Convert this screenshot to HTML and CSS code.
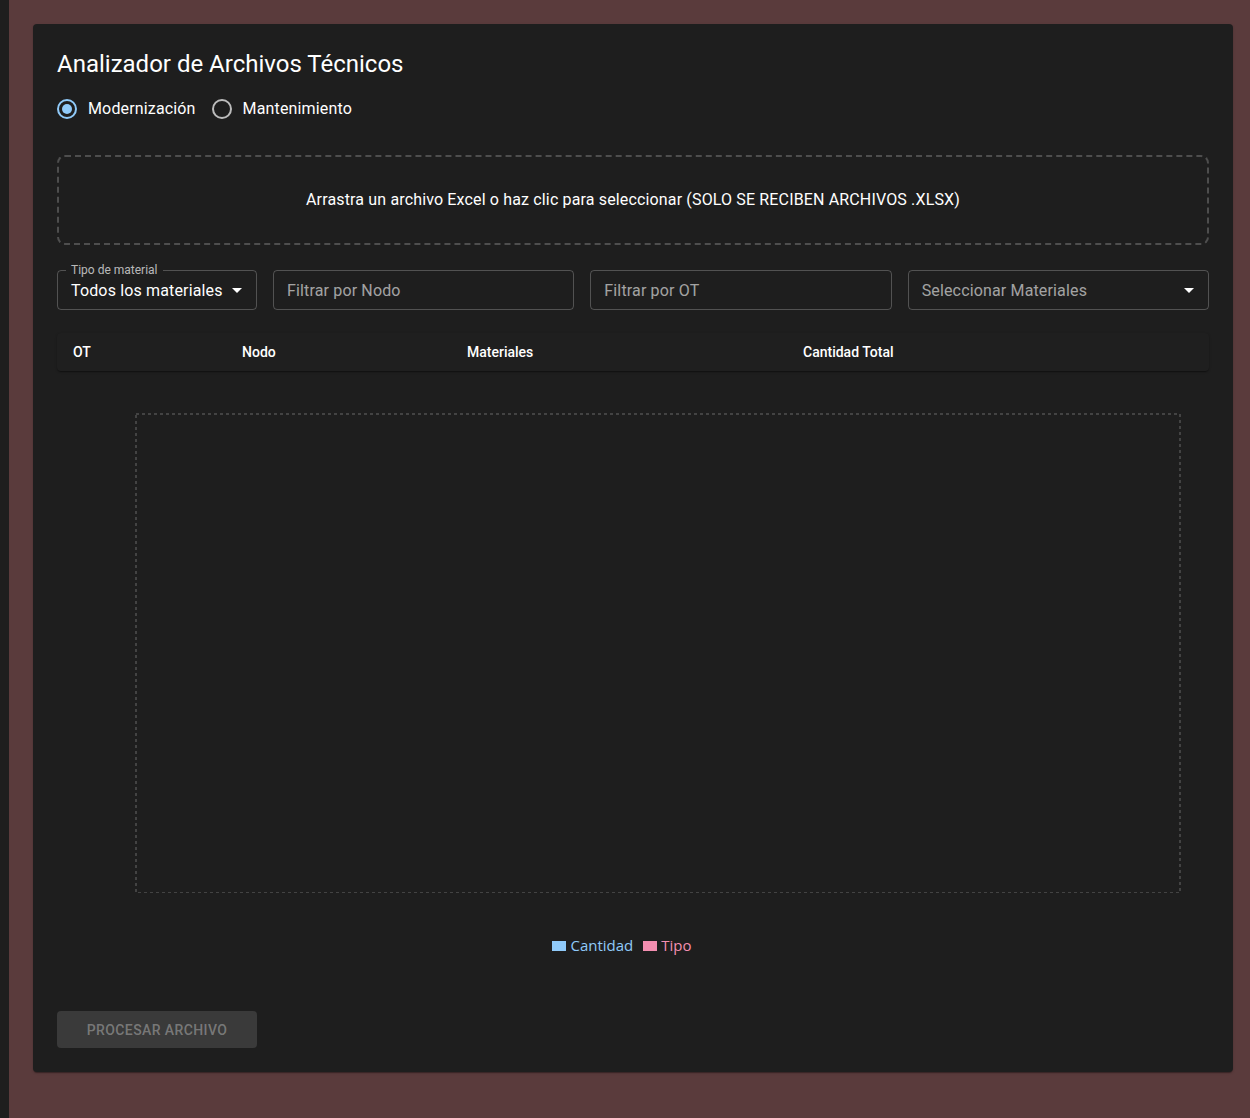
FILE: index.html
```html
<!DOCTYPE html>
<html lang="es">
<head>
<meta charset="utf-8">
<title>Analizador de Archivos Técnicos</title>
<link rel="stylesheet" href="styles.css">
</head>
<body>
<div class="strip"></div>
<main class="main">
  <section class="card">
    <h1 class="title">Analizador de Archivos Técnicos</h1>
    <div class="radios">
      <label class="radio checked">
        <span class="radio-box">
          <svg width="24" height="24" viewBox="0 0 24 24"><circle cx="12" cy="12" r="9" fill="none" stroke="#90caf9" stroke-width="2"/><circle cx="12" cy="12" r="5" fill="#90caf9"/></svg>
        </span>
        <span class="radio-label">Modernización</span>
      </label>
      <label class="radio">
        <span class="radio-box">
          <svg width="24" height="24" viewBox="0 0 24 24"><circle cx="12" cy="12" r="9" fill="none" stroke="rgba(255,255,255,0.7)" stroke-width="2"/></svg>
        </span>
        <span class="radio-label">Mantenimiento</span>
      </label>
    </div>

    <div class="dropzone">Arrastra un archivo Excel o haz clic para seleccionar (SOLO SE RECIBEN ARCHIVOS .XLSX)</div>

    <div class="filters">
      <div class="field select-field">
        <span class="field-label">Tipo de material</span>
        <span class="value">Todos los materiales</span>
        <svg class="caret" width="24" height="24" viewBox="0 0 24 24"><path d="M7 10l5 5 5-5z" fill="#fff"/></svg>
      </div>
      <div class="field grow"><span class="placeholder">Filtrar por Nodo</span></div>
      <div class="field grow"><span class="placeholder">Filtrar por OT</span></div>
      <div class="field grow multi">
        <span class="placeholder">Seleccionar Materiales</span>
        <svg class="caret" width="24" height="24" viewBox="0 0 24 24"><path d="M7 10l5 5 5-5z" fill="#fff"/></svg>
      </div>
    </div>

    <div class="table">
      <div class="th">OT</div>
      <div class="th">Nodo</div>
      <div class="th">Materiales</div>
      <div class="th">Cantidad Total</div>
    </div>

    <div class="chart">
      <svg class="plot" width="1152" height="502" viewBox="0 0 1152 502">
        <rect x="79" y="23" width="1044" height="479" fill="none" stroke="#434343" stroke-width="2" stroke-dasharray="3 3"/>
      </svg>
      <div class="legend">
        <span class="legend-item blue"><span class="swatch"></span>Cantidad</span>
        <span class="legend-item pink"><span class="swatch"></span>Tipo</span>
      </div>
    </div>

    <button class="btn" disabled>Procesar archivo</button>
  </section>
</main>
</body>
</html>
```

FILE: styles.css
```css
* { box-sizing: border-box; }

html, body {
  margin: 0;
  padding: 0;
}

body {
  display: flex;
  min-height: 100vh;
  background: #5a3b3c;
  font-family: Roboto, "Liberation Sans", sans-serif;
  color: #fff;
}

.strip {
  width: 9px;
  flex: none;
  background: #1e1e1e;
}

.main {
  flex: 1;
  background: #5a3b3c;
  padding: 24px 0 24px 24px;
}

.card {
  width: 1200px;
  background: #1e1e1e;
  border-radius: 4px;
  padding: 24px;
  box-shadow: 0 2px 1px -1px rgba(0,0,0,0.2), 0 1px 1px 0 rgba(0,0,0,0.14), 0 1px 3px 0 rgba(0,0,0,0.12);
}

.title {
  margin: 0 0 8px;
  font-size: 24px;
  font-weight: 400;
  line-height: 32px;
  color: #fff;
}

.radios {
  display: flex;
  height: 42px;
  align-items: center;
}

.radio {
  display: flex;
  align-items: center;
  margin-left: -11px;
  margin-right: 16px;
}

.radio-box {
  width: 42px;
  height: 42px;
  padding: 9px;
  display: flex;
}

.radio-label {
  font-size: 16px;
  line-height: 24px;
  letter-spacing: 0.15px;
}

.dropzone {
  margin-top: 25px;
  height: 90px;
  border: 2px dashed #4e4e4e;
  border-radius: 8px;
  display: flex;
  align-items: center;
  justify-content: center;
  font-size: 16px;
  letter-spacing: 0.15px;
  color: #fff;
  padding-bottom: 1px;
}

.filters {
  margin-top: 25px;
  display: flex;
  gap: 16px;
}

.field {
  position: relative;
  height: 40px;
  border: 1px solid rgba(255,255,255,0.23);
  border-radius: 4px;
  display: flex;
  align-items: center;
  padding: 0 13px;
  font-size: 16px;
  letter-spacing: 0.15px;
}

.select-field {
  width: 200px;
  flex: none;
}

.grow { flex: 1; }

.field-label {
  position: absolute;
  left: 8px;
  top: -8px;
  padding: 0 5px;
  background: #1e1e1e;
  font-size: 12px;
  line-height: 14px;
  letter-spacing: 0;
  color: rgba(255,255,255,0.7);
}

.value { color: #fff; }

.placeholder { color: rgba(255,255,255,0.6); }

.caret {
  position: absolute;
  right: 7px;
  top: 7px;
}

.table {
  margin-top: 23px;
  height: 38px;
  display: grid;
  grid-template-columns: 169px 225px 336px 1fr;
  align-items: center;
  background: #1f1f1f;
  border-radius: 4px;
  padding-bottom: 1px;
  box-shadow: 0 2px 1px -1px rgba(0,0,0,0.2), 0 1px 1px 0 rgba(0,0,0,0.14), 0 1px 3px 0 rgba(0,0,0,0.12);
}

.th {
  padding: 0 16px;
  font-size: 14px;
  font-weight: 500;
  color: #fff;
}

.chart {
  margin-top: 20px;
}

.plot { display: block; }

.legend {
  margin-top: 42px;
  height: 20px;
  display: flex;
  justify-content: center;
  align-items: center;
  gap: 10px;
  font-family: "Open Sans", "Noto Sans", sans-serif;
  font-size: 15px;
  padding-right: 22px;
}

.legend-item {
  display: flex;
  align-items: center;
}

.swatch {
  width: 14px;
  height: 10px;
  margin-right: 4px;
  margin-top: 2px;
}

.blue { color: #90caf9; }
.blue .swatch { background: #90caf9; }
.pink { color: #f48fb1; }
.pink .swatch { background: #f48fb1; }

.btn {
  display: block;
  margin-top: 56px;
  width: 200px;
  height: 37px;
  border: 0;
  border-radius: 4px;
  background: #3a3a3a;
  color: rgba(255,255,255,0.32);
  font-family: Roboto, "Liberation Sans", sans-serif;
  font-size: 14px;
  font-weight: 500;
  letter-spacing: 0.4px;
  text-transform: uppercase;
}
```
